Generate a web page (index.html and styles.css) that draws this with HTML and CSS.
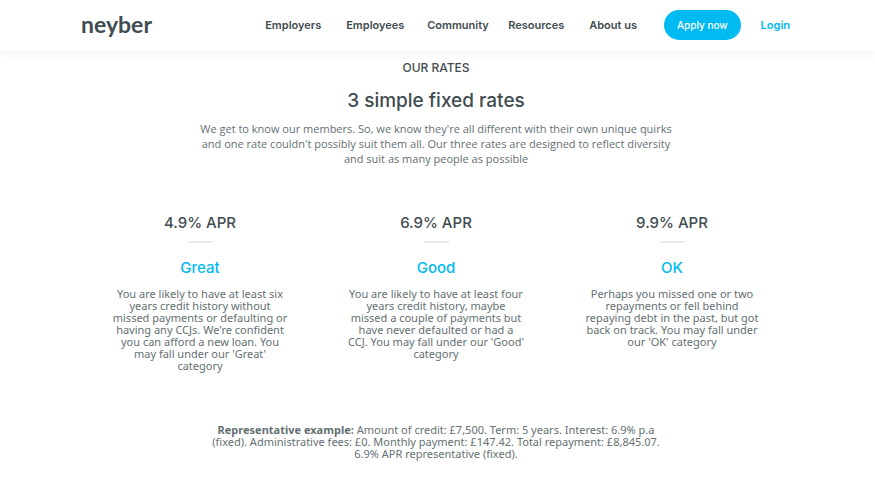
FILE: index.html
```html
<!DOCTYPE html>
<html lang="en">
<head>
<meta charset="utf-8">
<meta name="viewport" content="width=device-width, initial-scale=1">
<title>Neyber rates</title>
<link rel="stylesheet" href="styles.css">
</head>
<body>
<header class="header">
  <a class="logo" href="#">neyber</a>
  <nav class="nav">
    <ul class="menu">
      <li><a href="#">Employers</a></li>
      <li><a href="#">Employees</a></li>
      <li><a href="#">Community</a></li>
      <li><a href="#">Resources</a></li>
      <li><a href="#">About us</a></li>
    </ul>
    <button class="apply" type="button">Apply now</button>
    <a class="login" href="#">Login</a>
  </nav>
</header>
<main class="main">
  <section class="intro">
    <p class="eyebrow">OUR RATES</p>
    <h1>3 simple fixed rates</h1>
    <p class="lead">We get to know our members. So, we know they're all different with their own unique quirks<br>and one rate couldn't possibly suit them all. Our three rates are designed to reflect diversity<br>and suit as many people as possible</p>
  </section>
  <section class="rates">
    <article class="rate">
      <h2>4.9% APR</h2>
      <h3>Great</h3>
      <p>You are likely to have at least six<br>years credit history without<br>missed payments or defaulting or<br>having any CCJs. We're confident<br>you can afford a new loan. You<br>may fall under our 'Great'<br>category</p>
    </article>
    <article class="rate">
      <h2>6.9% APR</h2>
      <h3>Good</h3>
      <p>You are likely to have at least four<br>years credit history, maybe<br>missed a couple of payments but<br>have never defaulted or had a<br>CCJ. You may fall under our 'Good'<br>category</p>
    </article>
    <article class="rate">
      <h2>9.9% APR</h2>
      <h3>OK</h3>
      <p>Perhaps you missed one or two<br>repayments or fell behind<br>repaying debt in the past, but got<br>back on track. You may fall under<br>our 'OK' category</p>
    </article>
  </section>
  <p class="example"><strong>Representative example:</strong> Amount of credit: £7,500. Term: 5 years. Interest: 6.9% p.a<br>(fixed). Administrative fees: £0. Monthly payment: £147.42. Total repayment: £8,845.07.<br>6.9% APR representative (fixed).</p>
</main>
</body>
</html>
```
FILE: styles.css
```css
* {
  box-sizing: border-box;
}

body,
h1,
h2,
h3,
p,
ul {
  margin: 0;
  padding: 0;
}

body {
  background: #fff;
  color: #647073;
  font-family: "Noto Sans", "Open Sans", sans-serif;
  font-size: 11px;
}

a {
  color: inherit;
  text-decoration: none;
}

.header,
.eyebrow,
h1,
h2,
h3 {
  color: #3f4c50;
  font-family: Inter, sans-serif;
  font-weight: 500;
}

.header {
  display: flex;
  align-items: center;
  justify-content: space-between;
  padding: 10px 85px 11px 81px;
  box-shadow: 0 2px 10px rgba(0, 0, 0, 0.06);
}

.logo {
  padding-bottom: 3px;
  font-family: Lato, sans-serif;
  font-size: 23px;
  font-weight: 700;
  line-height: 24px;
}

.nav {
  display: flex;
  align-items: center;
  font-size: 11px;
  font-weight: 600;
}

.menu {
  display: grid;
  grid-template-columns: repeat(4, 81px) auto;
  margin-right: 27px;
  list-style: none;
}

.apply {
  height: 30px;
  padding: 0 13px;
  border: 0;
  border-radius: 15px;
  background: #00baf2;
  color: #fff;
  font: 500 10px Inter, sans-serif;
}

.login {
  margin-left: 20px;
  color: #00baf2;
}

.main {
  padding: 9px 85px 20px 82px;
  text-align: center;
}

.eyebrow {
  font-size: 12px;
  line-height: 16px;
}

h1 {
  margin-top: 13px;
  font-size: 19px;
  line-height: 24px;
}

.lead {
  margin-top: 8px;
  font-family: "Open Sans", sans-serif;
  line-height: 15px;
}

.rates {
  display: grid;
  grid-template-columns: repeat(3, 1fr);
  margin-top: 47px;
}

h2 {
  font-size: 15px;
  line-height: 20px;
}

h2::after {
  content: "";
  display: block;
  width: 25px;
  height: 2px;
  margin: 8px auto 0;
  background: #e9ebeb;
}

h3 {
  margin-top: 15px;
  color: #00baf2;
  font-size: 15px;
  line-height: 20px;
}

.rate p {
  margin-top: 10px;
  line-height: 12px;
}

.example {
  margin-top: 52px;
  line-height: 12px;
}
```
